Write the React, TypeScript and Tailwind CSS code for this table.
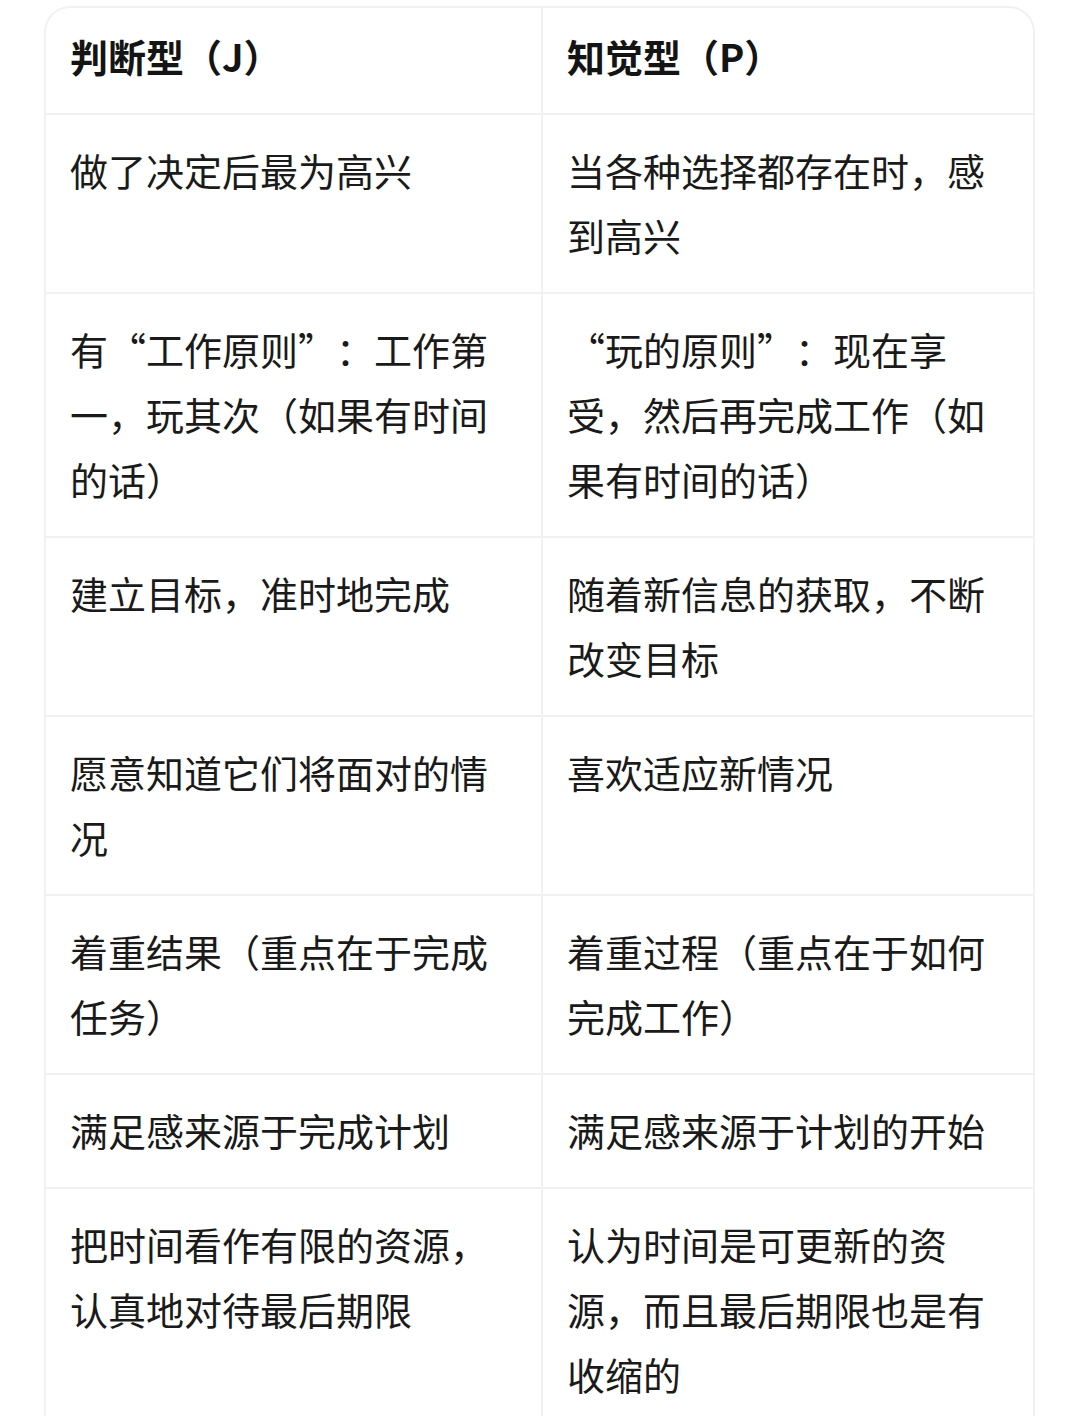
const HEAD = ["判断型（J）", "知觉型（P）"];

const ROWS: [string, string][] = [
  ["做了决定后最为高兴", "当各种选择都存在时，感到高兴"],
  ["有“工作原则”：工作第一，玩其次（如果有时间的话）", "“玩的原则”：现在享受，然后再完成工作（如果有时间的话）"],
  ["建立目标，准时地完成", "随着新信息的获取，不断改变目标"],
  ["愿意知道它们将面对的情况", "喜欢适应新情况"],
  ["着重结果（重点在于完成任务）", "着重过程（重点在于如何完成工作）"],
  ["满足感来源于完成计划", "满足感来源于计划的开始"],
  ["把时间看作有限的资源，认真地对待最后期限", "认为时间是可更新的资源，而且最后期限也是有收缩的"],
];

export default function App() {
  return (
    <div
      lang="zh-CN"
      className="w-[1080px] h-[1416px] overflow-hidden bg-white pt-[6px]"
      style={{ fontFamily: '"Noto Sans CJK SC", "Noto Sans", sans-serif' }}
    >
      <div className="ml-[44px] w-[991px] rounded-t-[26px] border-2 border-b-0 border-[#f1f1f1] overflow-hidden">
        <div className="grid grid-cols-[497px_1fr]">
          {HEAD.map((h, i) => (
            <div
              key={h}
              className={`px-[24px] pt-[15px] pb-[24px] text-[38px] leading-[66px] font-bold text-[#141414] border-b-2 border-[#f1f1f1] ${
                i === 0 ? "border-r-2" : ""
              }`}
            >
              {h}
            </div>
          ))}
          {ROWS.map(([a, b], r) => (
            <Row key={r} left={a} right={b} />
          ))}
        </div>
      </div>
    </div>
  );
}

function Row({ left, right }: { left: string; right: string }) {
  return (
    <>
      <div className="px-[24px] pt-[22px] pb-[25px] text-[38px] leading-[65px] text-[#1a1a1a] border-b-2 border-r-2 border-[#f1f1f1] [text-spacing-trim:space-all]">
        {left}
      </div>
      <div className="pl-[24px] pr-[22px] pt-[22px] pb-[25px] text-[38px] leading-[65px] text-[#1a1a1a] border-b-2 border-[#f1f1f1] [text-spacing-trim:space-all]">
        {right}
      </div>
    </>
  );
}
